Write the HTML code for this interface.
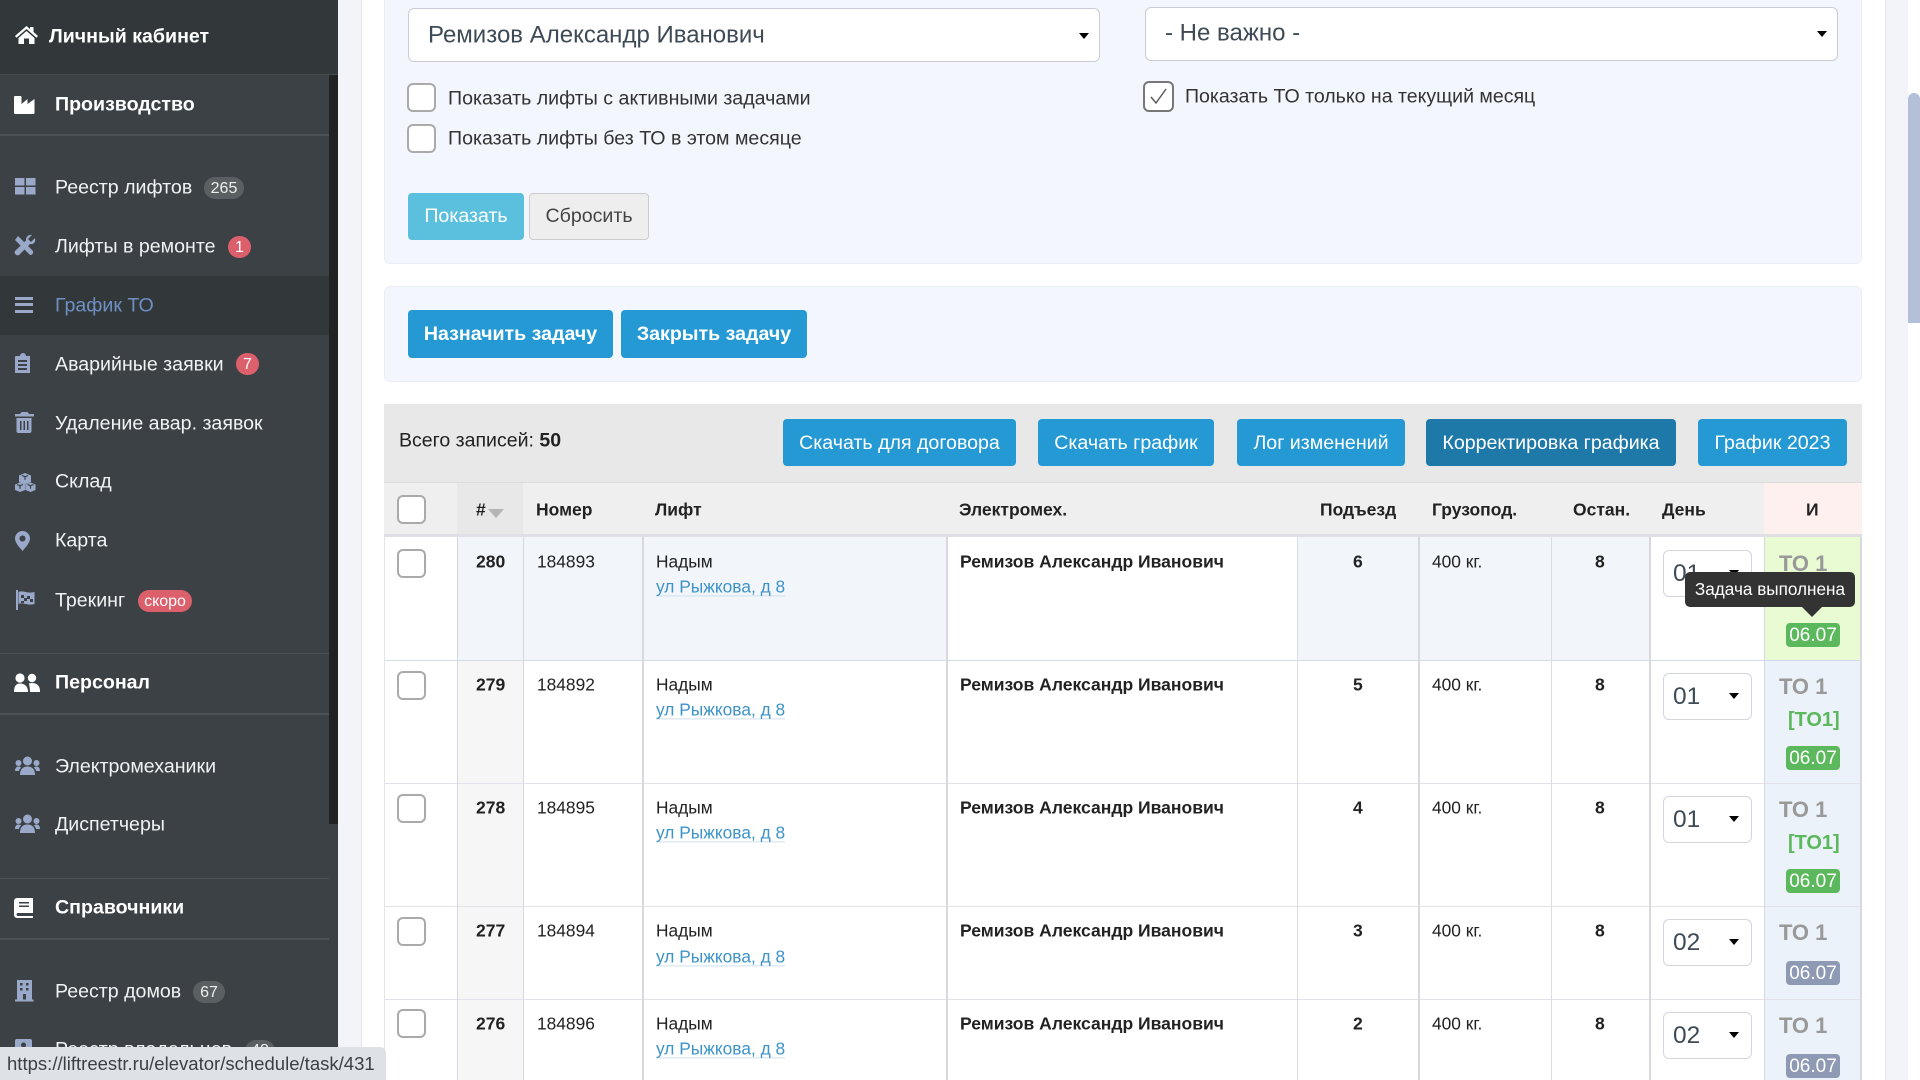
<!DOCTYPE html>
<html lang="ru"><head><meta charset="utf-8"><title>График ТО</title>
<style>
html,body{margin:0;padding:0;width:1920px;height:1080px;overflow:hidden;background:#fff;font-family:"Liberation Sans",Arial,sans-serif;color:#222}
.b{position:absolute}
.t{position:absolute;white-space:nowrap;transform:translateY(-50%);line-height:1.2}
.s{color:#f1f2f3;font-size:19.6px;left:55px}
.h{color:#fff;font-size:19.6px;font-weight:bold;left:55px}
.bd{position:absolute;border-radius:11px;color:#eee;font-size:16px;text-align:center;height:22px;line-height:22px}
.btn{position:absolute;border-radius:4px;background:#2499d3;color:#fff;font-size:19.6px;text-align:center;top:419px;height:47px;line-height:48px}
.cb{position:absolute;width:25px;height:25px;border:2px solid #aaa;border-radius:6px;background:#fff}
.c{font-size:17.35px;color:#222}
.c b{font-size:17.55px}
.th{font-size:17.5px;font-weight:bold;color:#222;top:510px}
.sel{position:absolute;left:1663px;width:87px;height:45px;border:1px solid #d3d6de;border-radius:6px;background:#fff;color:#3e4a55;font-size:24.5px;line-height:45px;text-indent:9px}
.arr{position:absolute;width:0;height:0;border-left:5.5px solid transparent;border-right:5.5px solid transparent;border-top:6px solid #000}
.to{position:absolute;left:1779px;font-size:22px;font-weight:bold;color:#999;line-height:1;white-space:nowrap}
.br{position:absolute;left:1788px;font-size:20px;font-weight:bold;color:#5cb85c;line-height:1}
.dt{position:absolute;left:1786px;width:54px;height:24px;border-radius:4px;color:#fff;font-size:19px;line-height:25px;text-align:center}
a{color:#3c93c9;text-decoration:none}
</style></head><body>

<!-- background gutters -->
<div class="b" style="left:338px;top:0;width:23px;height:1080px;background:#f3f4f9;border-right:1px solid #e6e8ef"></div>
<div class="b" style="left:1885px;top:0;width:23px;height:1080px;background:#f3f4f9;border-left:1px solid #e6e8ef"></div>
<div class="b" style="left:1908px;top:0;width:12px;height:1080px;background:#fff"></div>
<div class="b" style="left:1908px;top:93px;width:12px;height:230px;background:#b4c0d8;border-radius:6px 6px 0 0"></div>

<!-- filter panel -->
<div class="b" style="left:384px;top:-6px;width:1476px;height:268px;background:#f4f6fd;border:1px solid #eceef5;border-radius:6px"></div>
<div class="b" style="left:408px;top:8px;width:690px;height:52px;background:#fff;border:1px solid #c9ccd6;border-radius:6px"></div>
<div class="t" style="left:428px;top:36px;font-size:24px;color:#3e4a55">Ремизов Александр Иванович</div>
<div class="arr" style="left:1079px;top:33px;border-top-width:6px"></div>
<div class="b" style="left:1145px;top:7px;width:691px;height:52px;background:#fff;border:1px solid #c9ccd6;border-radius:6px"></div>
<div class="t" style="left:1165px;top:34px;font-size:24px;color:#3e4a55">- Не важно -</div>
<div class="arr" style="left:1817px;top:31px"></div>

<div class="cb" style="left:407px;top:83px"></div>
<div class="t" style="left:448px;top:99px;font-size:19.6px;color:#333">Показать лифты с активными задачами</div>
<div class="cb" style="left:407px;top:124px"></div>
<div class="t" style="left:448px;top:139px;font-size:19.6px;color:#333">Показать лифты без ТО в этом месяце</div>
<div class="cb" style="left:1143px;top:81px;width:27px;height:27px;border-color:#777"></div>
<svg class="b" style="left:1144px;top:82px" width="29" height="29" viewBox="0 0 29 29"><path d="M7 15 L12 21 L22 7" fill="none" stroke="#555" stroke-width="1.4"/></svg>
<div class="t" style="left:1185px;top:97px;font-size:19.55px;color:#333">Показать ТО только на текущий месяц</div>

<div class="b" style="left:408px;top:193px;width:116px;height:47px;line-height:47px;background:#5bc0de;border-radius:4px;color:#fff;font-size:19.6px;text-align:center">Показать</div>
<div class="b" style="left:529px;top:193px;width:118px;height:45px;line-height:45px;background:#eee;border:1px solid #ccc;border-radius:4px;color:#444;font-size:19.6px;text-align:center">Сбросить</div>

<!-- task panel -->
<div class="b" style="left:384px;top:286px;width:1476px;height:94px;background:#f4f6fd;border:1px solid #eceef5;border-radius:6px"></div>
<div class="b" style="left:408px;top:310px;width:205px;height:48px;line-height:48px;background:#2499d3;border-radius:4px;color:#fff;font-size:19.6px;font-weight:bold;text-align:center">Назначить задачу</div>
<div class="b" style="left:621px;top:310px;width:186px;height:48px;line-height:48px;background:#2499d3;border-radius:4px;color:#fff;font-size:19.6px;font-weight:bold;text-align:center">Закрыть задачу</div>

<!-- toolbar -->
<div class="b" style="left:384px;top:404px;width:1478px;height:78px;background:#e8e8e8;border-bottom:1px solid #dcdcdc"></div>
<div class="t" style="left:399px;top:441px;font-size:19.55px;color:#222">Всего записей: <b>50</b></div>
<div class="btn" style="left:783px;width:233px">Скачать для договора</div>
<div class="btn" style="left:1038px;width:176px">Скачать график</div>
<div class="btn" style="left:1237px;width:168px">Лог изменений</div>
<div class="btn" style="left:1426px;width:250px;background:#1f79a8">Корректировка графика</div>
<div class="btn" style="left:1698px;width:149px">График 2023</div>

<!-- table header -->
<div class="b" style="left:384px;top:483px;width:1478px;height:51px;background:#efefef"></div>
<div class="b" style="left:457px;top:483px;width:66px;height:51px;background:#e8e8e8"></div>
<div class="b" style="left:1764px;top:483px;width:98px;height:51px;background:#fdf0ee"></div>
<div class="b" style="left:384px;top:534px;width:1478px;height:3px;background:#dfdfe4"></div>
<div class="cb" style="left:397px;top:495px"></div>
<div class="t th" style="left:476px">#</div>
<div class="b" style="left:488px;top:509px;width:0;height:0;border-left:8px solid transparent;border-right:8px solid transparent;border-top:9px solid #b5b5b5"></div>
<div class="t th" style="left:536px">Номер</div>
<div class="t th" style="left:655px">Лифт</div>
<div class="t th" style="left:959px">Электромех.</div>
<div class="t th" style="left:1320px">Подъезд</div>
<div class="t th" style="left:1432px">Грузопод.</div>
<div class="t th" style="left:1573px">Остан.</div>
<div class="t th" style="left:1662px">День</div>
<div class="t th" style="left:1806px">И</div>

<!-- row backgrounds -->
<div class="b" style="left:457px;top:537px;width:490px;height:124px;background:#f2f6fb"></div>
<div class="b" style="left:1297px;top:537px;width:353px;height:124px;background:#f2f6fb"></div>
<div class="b" style="left:457px;top:661px;width:66px;height:419px;background:#f6f6f6"></div>
<div class="b" style="left:1764px;top:537px;width:97px;height:124px;background:#e8fbd2"></div>
<div class="b" style="left:1764px;top:661px;width:97px;height:419px;background:#ebf2f9"></div>

<!-- row lines -->
<div class="b" style="left:384px;top:660px;width:1477px;height:1px;background:#d5dae8"></div>
<div class="b" style="left:384px;top:783px;width:1477px;height:1px;background:#e2e2e8"></div>
<div class="b" style="left:384px;top:906px;width:1477px;height:1px;background:#e2e2e8"></div>
<div class="b" style="left:384px;top:999px;width:1477px;height:1px;background:#e2e2e8"></div>
<!-- column lines -->
<div class="b" style="left:384px;top:537px;width:1px;height:543px;background:#e4e4ea"></div>
<div class="b" style="left:457px;top:537px;width:1px;height:543px;background:#d5d8e2"></div>
<div class="b" style="left:523px;top:537px;width:1px;height:543px;background:#d5d8e2"></div>
<div class="b" style="left:642px;top:537px;width:2px;height:543px;background:#d8d8de"></div>
<div class="b" style="left:946px;top:537px;width:2px;height:543px;background:#d8d8de"></div>
<div class="b" style="left:1297px;top:537px;width:1px;height:543px;background:#dcdce4"></div>
<div class="b" style="left:1418px;top:537px;width:1.5px;height:543px;background:#d8d8e0"></div>
<div class="b" style="left:1551px;top:537px;width:1px;height:543px;background:#dcdce4"></div>
<div class="b" style="left:1649px;top:537px;width:2px;height:543px;background:#d8d8de"></div>
<div class="b" style="left:1764px;top:537px;width:1px;height:543px;background:#d5d8e2"></div>
<div class="b" style="left:1860px;top:537px;width:2px;height:543px;background:#d8d8de"></div>

<!-- row 280 -->
<div class="cb" style="left:397px;top:549px"></div>
<div class="t c" style="left:476px;top:562px"><b>280</b></div>
<div class="t c" style="left:537px;top:562px">184893</div>
<div class="t c" style="left:656px;top:562px">Надым</div>
<div class="t c" style="left:656px;top:587px;border-bottom:1px solid #cfe0ee;line-height:1.05"><a>ул Рыжкова, д 8</a></div>
<div class="t c" style="left:960px;top:562px"><b>Ремизов Александр Иванович</b></div>
<div class="t c" style="left:1353px;top:562px"><b>6</b></div>
<div class="t c" style="left:1432px;top:562px">400 кг.</div>
<div class="t c" style="left:1595px;top:562px"><b>8</b></div>
<div class="sel" style="top:550px">01</div><div class="arr" style="left:1729px;top:570px"></div>
<div class="to" style="top:553px">ТО 1</div>
<div class="br" style="top:587px">[ТО1]</div>
<div class="dt" style="top:623px;background:#5cb85c">06.07</div>

<!-- row 279 -->
<div class="cb" style="left:397px;top:671px"></div>
<div class="t c" style="left:476px;top:685px"><b>279</b></div>
<div class="t c" style="left:537px;top:685px">184892</div>
<div class="t c" style="left:656px;top:685px">Надым</div>
<div class="t c" style="left:656px;top:710px;border-bottom:1px solid #cfe0ee;line-height:1.05"><a>ул Рыжкова, д 8</a></div>
<div class="t c" style="left:960px;top:685px"><b>Ремизов Александр Иванович</b></div>
<div class="t c" style="left:1353px;top:685px"><b>5</b></div>
<div class="t c" style="left:1432px;top:685px">400 кг.</div>
<div class="t c" style="left:1595px;top:685px"><b>8</b></div>
<div class="sel" style="top:673px">01</div><div class="arr" style="left:1729px;top:693px"></div>
<div class="to" style="top:676px">ТО 1</div>
<div class="br" style="top:710px">[ТО1]</div>
<div class="dt" style="top:746px;background:#5cb85c">06.07</div>

<!-- row 278 -->
<div class="cb" style="left:397px;top:794px"></div>
<div class="t c" style="left:476px;top:808px"><b>278</b></div>
<div class="t c" style="left:537px;top:808px">184895</div>
<div class="t c" style="left:656px;top:808px">Надым</div>
<div class="t c" style="left:656px;top:833px;border-bottom:1px solid #cfe0ee;line-height:1.05"><a>ул Рыжкова, д 8</a></div>
<div class="t c" style="left:960px;top:808px"><b>Ремизов Александр Иванович</b></div>
<div class="t c" style="left:1353px;top:808px"><b>4</b></div>
<div class="t c" style="left:1432px;top:808px">400 кг.</div>
<div class="t c" style="left:1595px;top:808px"><b>8</b></div>
<div class="sel" style="top:796px">01</div><div class="arr" style="left:1729px;top:816px"></div>
<div class="to" style="top:799px">ТО 1</div>
<div class="br" style="top:833px">[ТО1]</div>
<div class="dt" style="top:869px;background:#5cb85c">06.07</div>

<!-- row 277 -->
<div class="cb" style="left:397px;top:917px"></div>
<div class="t c" style="left:476px;top:931px"><b>277</b></div>
<div class="t c" style="left:537px;top:931px">184894</div>
<div class="t c" style="left:656px;top:931px">Надым</div>
<div class="t c" style="left:656px;top:957px;border-bottom:1px solid #cfe0ee;line-height:1.05"><a>ул Рыжкова, д 8</a></div>
<div class="t c" style="left:960px;top:931px"><b>Ремизов Александр Иванович</b></div>
<div class="t c" style="left:1353px;top:931px"><b>3</b></div>
<div class="t c" style="left:1432px;top:931px">400 кг.</div>
<div class="t c" style="left:1595px;top:931px"><b>8</b></div>
<div class="sel" style="top:919px">02</div><div class="arr" style="left:1729px;top:939px"></div>
<div class="to" style="top:922px">ТО 1</div>
<div class="dt" style="top:961px;background:#8e9ab3">06.07</div>

<!-- row 276 -->
<div class="cb" style="left:397px;top:1009px"></div>
<div class="t c" style="left:476px;top:1024px"><b>276</b></div>
<div class="t c" style="left:537px;top:1024px">184896</div>
<div class="t c" style="left:656px;top:1024px">Надым</div>
<div class="t c" style="left:656px;top:1049px;border-bottom:1px solid #cfe0ee;line-height:1.05"><a>ул Рыжкова, д 8</a></div>
<div class="t c" style="left:960px;top:1024px"><b>Ремизов Александр Иванович</b></div>
<div class="t c" style="left:1353px;top:1024px"><b>2</b></div>
<div class="t c" style="left:1432px;top:1024px">400 кг.</div>
<div class="t c" style="left:1595px;top:1024px"><b>8</b></div>
<div class="sel" style="top:1012px">02</div><div class="arr" style="left:1729px;top:1032px"></div>
<div class="to" style="top:1015px">ТО 1</div>
<div class="dt" style="top:1054px;background:#8e9ab3">06.07</div>

<!-- tooltip -->
<div class="b" style="left:1685px;top:572px;width:170px;height:35px;line-height:35px;background:#333;border-radius:5px;color:#fff;font-size:17.15px;text-align:center">Задача выполнена</div>
<div class="b" style="left:1802px;top:607px;width:0;height:0;border-left:10px solid transparent;border-right:10px solid transparent;border-top:10px solid #333"></div>

<!-- sidebar -->
<div class="b" style="left:0;top:0;width:338px;height:1080px;background:#3b4144"></div>
<div class="b" style="left:0;top:0;width:338px;height:74px;background:#32383a;border-bottom:1.5px solid #464c4f"></div>
<div class="b" style="left:329px;top:75px;width:9px;height:749px;background:#222"></div>
<div class="b" style="left:0;top:276px;width:329px;height:59px;background:#32383a"></div>
<div class="b" style="left:0;top:134px;width:329px;height:1.5px;background:#4b5154"></div>
<div class="b" style="left:0;top:653px;width:329px;height:1px;background:#4b5154"></div>
<div class="b" style="left:0;top:713px;width:329px;height:1.5px;background:#4b5154"></div>
<div class="b" style="left:0;top:878px;width:329px;height:1px;background:#4b5154"></div>
<div class="b" style="left:0;top:938px;width:329px;height:1.5px;background:#4b5154"></div>

<div class="t" style="left:49px;top:37px;color:#fff;font-size:19.6px;font-weight:bold">Личный кабинет</div>
<div class="t h" style="top:105px">Производство</div>
<div class="t s" style="top:188px">Реестр лифтов</div>
<div class="bd" style="left:204px;top:177px;width:40px;background:#5a6062;line-height:23px">265</div>
<div class="t s" style="top:247px">Лифты в ремонте</div>
<div class="bd" style="left:228px;top:236px;width:23px;background:#dc5f6c;color:#fff;line-height:23px">1</div>
<div class="t s" style="top:306px;color:#6f8fc4">График ТО</div>
<div class="t s" style="top:365px">Аварийные заявки</div>
<div class="bd" style="left:236px;top:353px;width:23px;background:#dc5f6c;color:#fff;line-height:23px">7</div>
<div class="t s" style="top:424px">Удаление авар. заявок</div>
<div class="t s" style="top:482px">Склад</div>
<div class="t s" style="top:541px">Карта</div>
<div class="t s" style="top:601px">Трекинг</div>
<div class="bd" style="left:138px;top:590px;width:54px;background:#dc5f6c;color:#fff;line-height:23px">скоро</div>
<div class="t h" style="top:683px">Персонал</div>
<div class="t s" style="top:767px">Электромеханики</div>
<div class="t s" style="top:825px">Диспетчеры</div>
<div class="t h" style="top:908px">Справочники</div>
<div class="t s" style="top:992px">Реестр домов</div>
<div class="bd" style="left:193px;top:981px;width:32px;background:#5a6062;line-height:23px">67</div>
<div class="t s" style="top:1050px">Реестр владельцев</div>
<div class="bd" style="left:245px;top:1040px;width:30px;background:#5a6062">48</div>

<!-- sidebar icons -->
<svg class="b" style="left:0;top:0" width="338" height="1080" viewBox="0 0 338 1080">
<g fill="#fff">
<path d="M26.500 26 L15 36 l1.500 1.800 L26.500 29 l10 8.800 L38 36 L33.500 32 V27 h-3.500 v2 Z"/>
<path d="M18.500 38 L26.500 31 L34.500 38 V44 H29 V38.500 H24 V44 H18.500 Z"/>
<path transform="translate(0,1)" d="M15 95 h5.500 a1 1 0 0 1 1 1 V103 l6-5 v5 l7-5 v14 a1 1 0 0 1 -1 1 H15 a1 1 0 0 1 -1 -1 V96 a1 1 0 0 1 1 -1 Z"/>
<circle cx="20" cy="678" r="4.600"/><circle cx="32" cy="678" r="4.200"/>
<path d="M14 692 c0-7 3-8.500 6-8.500 s8 1.500 8 8.500 Z"/><path d="M29 683.500 c1-.5 2-.5 3-.5 4 0 8 2 8 8 v1 h-10 c0-3-.5-6-1-8.500 Z"/>
<path transform="translate(0,1)" d="M17 897 h16 v15 H18 a1.500 1.500 0 0 0 0 3 h15 v2 H17 a3 3 0 0 1 -3 -3 V900 a3 3 0 0 1 3 -3 Z M19 901 v1.500 h10 V901 Z M19 904.500 v1.500 h10 v-1.500 Z" fill-rule="evenodd"/>
</g>
<g fill="#9aa9c9">
<rect x="15" y="178" width="9.500" height="7.500"/><rect x="26" y="178" width="9.500" height="7.500"/>
<rect x="15" y="187" width="9.500" height="7.500"/><rect x="26" y="187" width="9.500" height="7.500"/>
<path d="M15 240 l3-4 L33 251 a3 3 0 0 1 -3 4 Z"/>
<path d="M35 238 l-4 4 -3-3 4-4 c-3-.8-6.500 1.500-6 5.500 L15 251 a3 3 0 0 0 4 4 l11-11 c4 1 6-2.500 5-6 Z"/>
<rect x="15" y="297" width="18" height="3"/><rect x="15" y="303" width="18" height="3"/><rect x="15" y="310" width="18" height="3"/>
<path transform="translate(0,-2)" d="M16 358 h4 a3 3 0 0 1 6 0 h4 v17 H15 V359 a1 1 0 0 1 1 -1 Z M18 362 v2 h9 v-2 Z M18 366 v2 h9 v-2 Z M18 370 v2 h9 v-2 Z" fill-rule="evenodd"/>
<path d="M15 414 h5 l1.500-2 h6 l1.500 2 h5 v2.500 H15 Z"/>
<path d="M16.500 418 h15 v13 a2 2 0 0 1 -2 2 h-11 a2 2 0 0 1 -2 -2 Z M20 421 v9 h1.500 v-9 Z M23.500 421 v9 h1.500 v-9 Z M27 421 v9 h1.500 v-9 Z" fill-rule="evenodd"/>
<path d="M25 473 l6 2.500 v6.500 l-6 2.500 -6-2.500 v-6.500 Z"/>
<path d="M20 482.500 l5.200 2 v5.500 l-5.200 2 -5-2 v-5.500 Z"/>
<path d="M30.500 482.500 l5 2 v5.500 l-5 2 -5-2 v-5.500 Z"/>
<path d="M22 475.500 l3 1.200 3-1.200 M25 476.700 v3 M17 484.500 l3 1.200 3-1.200 M20 485.700 v3 M27.500 484.500 l3 1.200 3-1.200 M30.500 485.700 v3" fill="none" stroke="#3b4144" stroke-width="1.200"/>
<path d="M22.500 531 a7.500 7.500 0 0 1 7.500 7.500 c0 4.500-5 9.500-7.500 12.500 c-2.500-3-7.500-8-7.500-12.500 a7.500 7.500 0 0 1 7.500 -7.500 Z M22.500 535.500 a3 3 0 1 0 .01 0 Z" fill-rule="evenodd"/>
<path d="M16 590 h2 v20 h-2 Z"/>
<path d="M18.500 592 c5-2 8 2 16 0 v12 c-8 2-11-2-16 0 Z" fill="#9aa9c9"/>
<path d="M21 595 h3 v3 h-3 Z M27 596 h3 v3 h-3 Z M24 598 h3 v3 h-3 Z M30 599 h3 v3 h-3 Z M21 601 h3 v2 h-3 Z" fill="#3b4144"/>
<g><circle cx="27.500" cy="761" r="4.500"/><circle cx="18.500" cy="763" r="3"/><circle cx="36.500" cy="763" r="3"/><path d="M20 775 c0-6 3-8.500 7.500-8.500 s7.500 2.500 7.500 8.500 Z"/><path d="M15 771 c0-3 1.500-4.500 3.500-4.500 1 0 2 .3 2.500 1 -1 1-2 2.500-2 3.500 Z M40 771 c0-3-1.500-4.500-3.500-4.500 -1 0-2 .3-2.500 1 1 1 2 2.500 2 3.500 Z"/></g>
<g transform="translate(0,58)"><circle cx="27.500" cy="761" r="4.500"/><circle cx="18.500" cy="763" r="3"/><circle cx="36.500" cy="763" r="3"/><path d="M20 775 c0-6 3-8.500 7.500-8.500 s7.500 2.500 7.500 8.500 Z"/><path d="M15 771 c0-3 1.500-4.500 3.500-4.500 1 0 2 .3 2.500 1 -1 1-2 2.500-2 3.500 Z M40 771 c0-3-1.500-4.500-3.500-4.500 -1 0-2 .3-2.500 1 1 1 2 2.500 2 3.500 Z"/></g>
<path d="M17 980 h15 v19.500 h1.500 v2 H15 v-2 h2 Z M20 983 v2.500 h2.500 V983 Z M26 983 v2.500 h2.500 V983 Z M20 988 v2.500 h2.500 V988 Z M26 988 v2.500 h2.500 V988 Z M23 994 v5.500 h3 V994 Z" fill-rule="evenodd"/>
<path d="M17 1039 h13 a2 2 0 0 1 2 2 v9 H15 v-9 a2 2 0 0 1 2 -2 Z"/>
<circle cx="23.500" cy="1045" r="2.500" fill="#3b4144"/>
</g>
</svg>

<!-- status bar -->
<div class="b" style="left:0;top:1047px;width:386px;height:33px;background:#dee1e6;border-top-right-radius:6px"></div>
<div class="t" style="left:7px;top:1064px;font-size:18.55px;color:#3c4043">https://liftreestr.ru/elevator/schedule/task/431</div>

</body></html>
